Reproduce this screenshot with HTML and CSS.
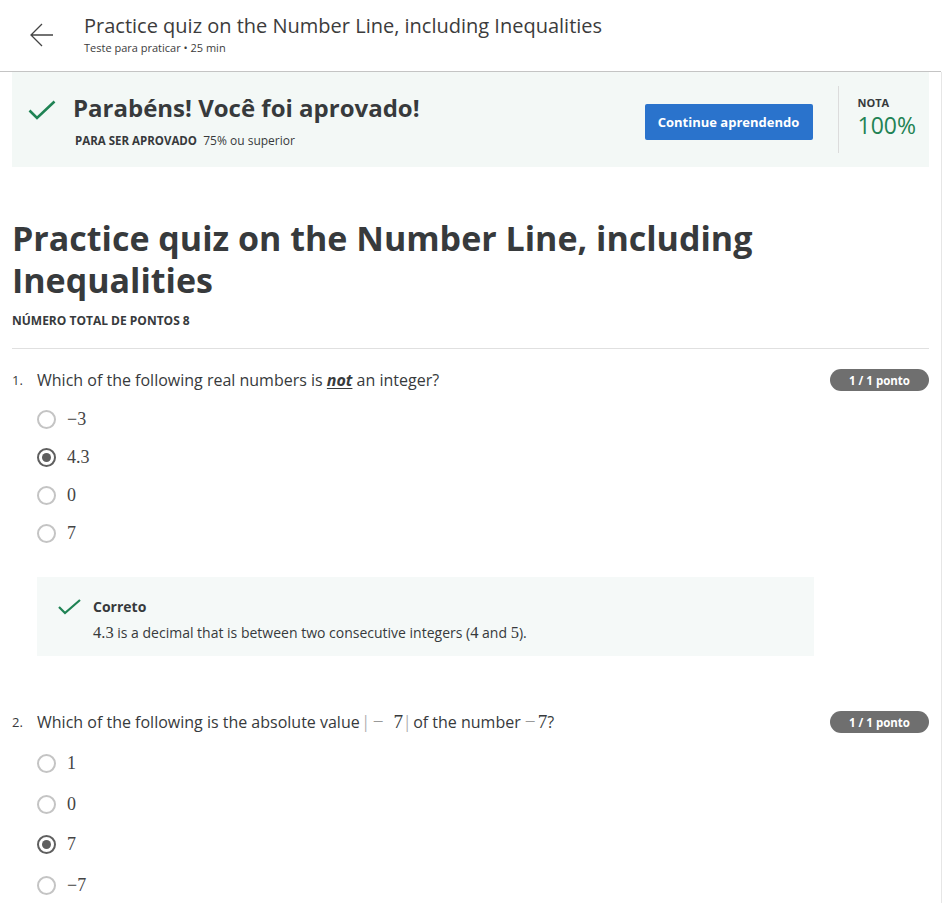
FILE: index.html
```html
<!DOCTYPE html>
<html lang="pt">
<head>
<meta charset="utf-8">
<title>Practice quiz</title>
<link rel="stylesheet" href="styles.css">
</head>
<body>
<header class="topbar">
  <a class="back" aria-label="Voltar">
    <svg width="26" height="24" viewBox="0 0 26 24"><path d="M24 12H2M13 1L2 12l11 11" fill="none" stroke="#444" stroke-width="1.3"/></svg>
  </a>
  <div class="topbar-text">
    <div class="topbar-title">Practice quiz on the Number Line, including Inequalities</div>
    <div class="topbar-sub">Teste para praticar • 25 min</div>
  </div>
</header>
<main class="page">
  <section class="banner">
    <div class="banner-check">
      <svg width="28" height="20" viewBox="0 0 28 20"><path d="M1.5 10.5l7.5 7.5L26.5 1.5" fill="none" stroke="#1f8354" stroke-width="2.6"/></svg>
    </div>
    <div class="banner-main">
      <div class="banner-title">Parabéns! Você foi aprovado!</div>
      <div class="banner-sub"><span class="caps">PARA SER APROVADO</span>&nbsp; 75% ou superior</div>
    </div>
    <button class="btn">Continue aprendendo</button>
    <div class="banner-div"></div>
    <div class="grade">
      <div class="caps">NOTA</div>
      <div class="grade-val">100%</div>
    </div>
  </section>

  <h1 class="quiz-title">Practice quiz on the Number Line, including Inequalities</h1>
  <div class="total caps">NÚMERO TOTAL DE PONTOS 8</div>
  <hr class="rule">

  <section class="question">
    <div class="q-head">
      <span class="q-num">1.</span>
      <span class="q-text">Which of the following real numbers is <b><i><u>not</u></i></b> an integer?</span>
      <span class="badge">1 / 1 ponto</span>
    </div>
    <ul class="options">
      <li class="opt"><span class="radio"></span><span class="math">−3</span></li>
      <li class="opt"><span class="radio on"></span><span class="math">4.3</span></li>
      <li class="opt"><span class="radio"></span><span class="math">0</span></li>
      <li class="opt"><span class="radio"></span><span class="math">7</span></li>
    </ul>
    <div class="feedback">
      <svg class="fb-check" width="23" height="16" viewBox="0 0 23 16"><path d="M1 8l6 6L22 1" fill="none" stroke="#1f8354" stroke-width="2.2"/></svg>
      <div>
        <div class="fb-title">Correto</div>
        <div class="fb-text"><span class="math">4.3</span> is a decimal that is between two consecutive integers (<span class="math">4</span> and <span class="math">5</span>).</div>
      </div>
    </div>
  </section>

  <section class="question q2">
    <div class="q-head">
      <span class="q-num">2.</span>
      <span class="q-text">Which of the following is the absolute value <span class="math"><span class="bar">|</span><span class="op">−</span>7<span class="bar bar-r">|</span></span> of the number <span class="math"><span class="op2">−</span>7</span>?</span>
      <span class="badge">1 / 1 ponto</span>
    </div>
    <ul class="options wide">
      <li class="opt"><span class="radio"></span><span class="math">1</span></li>
      <li class="opt"><span class="radio"></span><span class="math">0</span></li>
      <li class="opt"><span class="radio on"></span><span class="math">7</span></li>
      <li class="opt"><span class="radio"></span><span class="math">−7</span></li>
    </ul>
  </section>
</main>
</body>
</html>
```
FILE: styles.css
```css
* { box-sizing: border-box; }
html, body { margin: 0; padding: 0; background: #fff; }
body {
  font-family: "Open Sans", "Liberation Sans", sans-serif;
  color: #373a3c;
  width: 942px;
  overflow: hidden;
}
.topbar {
  height: 72px;
  border-bottom: 1px solid #c4c4c4;
  display: flex;
  align-items: center;
  width: 941px;
}
.back {
  width: 84px;
  display: flex;
  padding-left: 29px;
  margin-top: -2px;
}
.topbar-text { display: flex; flex-direction: column; margin-top: -3px; }
.topbar-title { font-size: 20px; color: #3c3c3c; line-height: 26px; }
.topbar-sub { font-size: 11px; color: #3c3c3c; line-height: 16px; margin-top: 1px; }

.page {
  width: 942px;
  border-right: 1px solid #e6e6e6;
  padding: 0 12px 40px 12px;
  min-height: 831px;
}
.caps { font-weight: 700; font-size: 11px; color: #373a3c; }

.banner {
  background: #f3f8f6;
  height: 95px;
  display: flex;
  align-items: center;
  padding: 0 13px 0 16px;
}
.banner-check { width: 45px; margin-top: -19px; display: flex; }
.banner-main { flex: 1; padding-top: 2px; }
.banner-title { font-size: 24px; font-weight: 700; line-height: 30px; color: #373a3c; }
.banner-sub { font-size: 12px; margin-top: 9px; padding-left: 2px; color: #373a3c; }
.banner-sub .caps { font-size: 11.5px; }
.btn {
  width: 168px;
  height: 36px;
  border: none;
  border-radius: 2px;
  background: #2a73cc;
  color: #fff;
  font-family: inherit;
  font-weight: 700;
  font-size: 13px;
  margin-top: 4px;
  margin-left: 2px;
}
.banner-div { width: 1px; height: 67px; background: #dcdcdc; margin: 0 19px 0 25px; }
.grade { display: flex; flex-direction: column; margin-top: -4px; }
.grade .caps { line-height: 14px; }
.grade-val { font-size: 23px; color: #1f8354; line-height: 28px; margin-top: 1px; }

.quiz-title {
  font-size: 34px;
  font-weight: 700;
  line-height: 42px;
  margin: 50px 0 0;
  color: #373a3c;
}
.total { margin-top: 12px; line-height: 16px; font-size: 12px; }
.rule { border: none; border-top: 1px solid #e0e0e0; margin: 19px 0 0; }

.question { padding-top: 20px; }
.q-head { display: flex; align-items: center; height: 22px; }
.q-num { width: 25px; font-size: 13px; color: #373a3c; }
.q-text { flex: 1; font-size: 16px; color: #373a3c; }
.q-text u { text-underline-offset: 2px; }
.q-text .math { font-size: 1.2em; }
.op { color: #999; margin: 0 10px 0 5px; }
.bar-r { margin-left: 2px; }
.op2 { color: #999; margin: 0 2px 0 0; }
.badge {
  background: #6f6f6f;
  color: #fff;
  font-size: 11.5px;
  font-weight: 700;
  height: 22px;
  width: 99px;
  border-radius: 11px;
  display: flex;
  align-items: center;
  justify-content: center;
}
.math { font-family: "Liberation Serif", "DejaVu Serif", serif; font-size: 1.15em; }
.bar { color: #aaa; }

.options { list-style: none; margin: 9px 0 0 25px; padding: 0; }
.opt { display: flex; align-items: center; height: 38px; }
.options.wide .opt { height: 40.7px; }
.options.wide { margin-top: 10px; }
.opt .math { font-size: 18px; color: #444; }
.radio {
  width: 19px;
  height: 19px;
  border-radius: 50%;
  border: 2px solid #c4c4c4;
  margin-right: 11px;
  display: flex;
  align-items: center;
  justify-content: center;
}
.radio.on { border-color: #5f5f5f; }
.radio.on::after {
  content: "";
  width: 9px;
  height: 9px;
  border-radius: 50%;
  background: #5f5f5f;
}

.feedback {
  margin: 25px 0 0 25px;
  width: 777px;
  height: 79px;
  background: #f5f9f8;
  display: flex;
  align-items: flex-start;
  padding: 20px 0 0 21px;
}
.fb-check { margin-top: 2px; margin-right: 12px; flex: none; }
.fb-title { font-size: 14px; font-weight: 700; line-height: 20px; }
.fb-text { font-size: 14px; line-height: 20px; margin-top: 6px; color: #373a3c; }
.fb-text .math { font-size: 16.5px; }
.q2 { padding-top: 55px; }
```
